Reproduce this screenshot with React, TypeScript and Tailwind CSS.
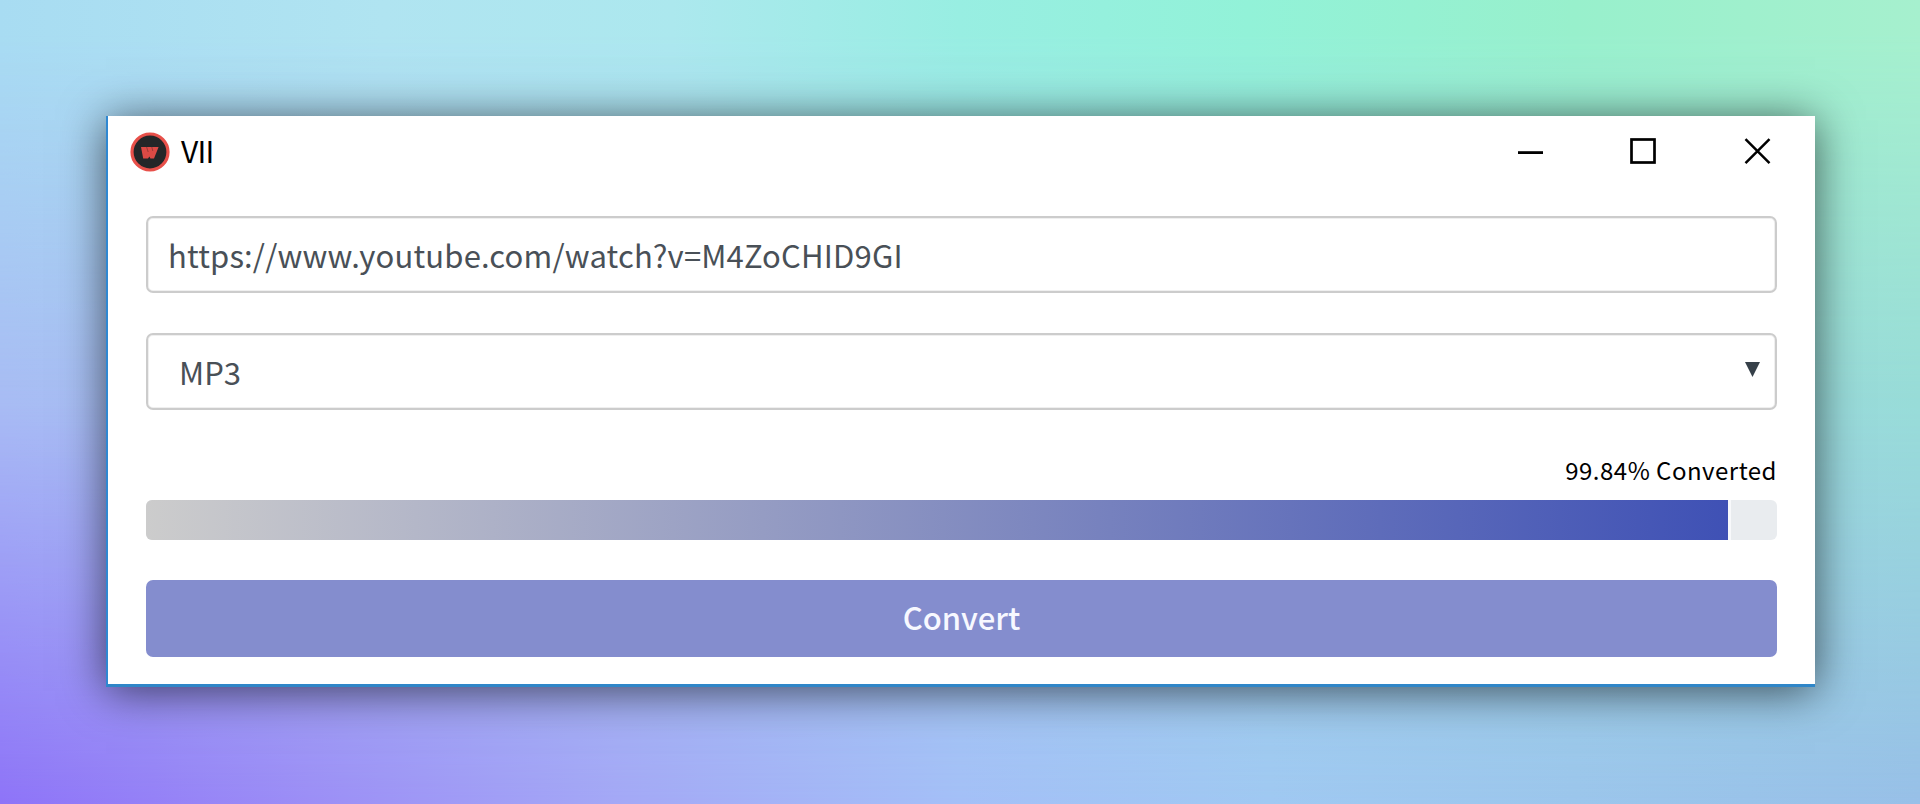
const layer = 'col-start-1 row-start-1 h-[804px] w-full';
const field =
  'flex h-[77px] items-center rounded-[7px] border-2 border-[#cccccc] text-[31px] leading-[40px] text-[#495057] shadow-[inset_0_0_0_1px_#efefef]';

function Backdrop() {
  return (
    <>
      <div
        className={`${layer} bg-[linear-gradient(90deg,#8e74f8_0%,#9c8ef6_16%,#a4a8f6_32%,#a4c0f7_50%,#a0c9f2_66%,#9cc6ec_82%,#98c0e8_100%)]`}
      />
      <div
        className={`${layer} bg-[linear-gradient(90deg,#a8bcf4_0%,#a4d0f0_50%,#98dcd8_100%)] [mask-image:linear-gradient(180deg,black_50%,transparent_100%)]`}
      />
      <div
        className={`${layer} bg-[linear-gradient(90deg,#a8dcf2_0%,#b0e4f1_20%,#ace8ee_35%,#98eee2_50%,#92f2d8_65%,#98f0cc_82%,#a6f0ce_100%)] [mask-image:linear-gradient(180deg,black_0%,black_4%,transparent_50%)]`}
      />
    </>
  );
}

function Logo() {
  return (
    <svg width="40" height="40" viewBox="0 0 40 40" aria-hidden="true">
      <circle cx="20" cy="20" r="18" fill="#242628" stroke="#e8504a" strokeWidth="3.2" />
      <path d="M11 15H28.6L24 26.6H20.4L19.4 24.4L18 26.6H13.2Z" fill="#dc4a45" />
      <path d="M16.6 15l1.6 5M21.8 15l1 4" stroke="#8c3431" strokeWidth=".8" />
    </svg>
  );
}

function TitleBar() {
  return (
    <header className="flex h-[72px] items-center justify-between pl-[22px] pr-[43px]">
      <div className="flex items-center gap-[11px]">
        <Logo />
        <span className="pb-[5px] text-[30px] leading-[40px] tracking-[-0.8px] text-black">VII</span>
      </div>
      <div className="flex items-center gap-[86px]">
        <button aria-label="Minimize">
          <svg width="28" height="28" viewBox="0 0 28 28">
            <path d="M2 14.6h25" stroke="#000" strokeWidth="2.8" />
          </svg>
        </button>
        <button aria-label="Maximize">
          <svg width="28" height="28" viewBox="0 0 28 28">
            <rect x="1.5" y="1.5" width="23" height="23" fill="none" stroke="#000" strokeWidth="2.7" />
          </svg>
        </button>
        <button aria-label="Close">
          <svg width="28" height="28" viewBox="0 0 28 28">
            <path d="M1.5 1.2l24 24M25.5 1.2l-24 24" stroke="#000" strokeWidth="2.5" />
          </svg>
        </button>
      </div>
    </header>
  );
}

export default function App() {
  const progress = 97.15;
  return (
    <div className="grid h-[804px] w-full overflow-hidden font-['Noto_Sans_CJK_JP',sans-serif]">
      <Backdrop />
      <main className="z-10 col-start-1 row-start-1 ml-[106px] mt-[116px] h-[571px] w-[1709px] border-b-[3px] border-l-2 border-b-[#2f86c8] border-l-[#2f88d2] bg-white shadow-[0_4px_42px_0_rgba(0,0,0,0.62)]">
        <TitleBar />
        <div className="flex flex-col pl-[38px] pr-[38px] pt-[28px]">
          <div className={`${field} pl-5 tracking-[0.17px]`}>https://www.youtube.com/watch?v=M4ZoCHID9GI</div>
          <div className={`${field} mt-[40px] justify-between pl-[31px] pr-[15px]`}>
            <span>MP3</span>
            <svg width="15" height="15" viewBox="0 0 15 15" className="mb-[4px]">
              <path d="M0 0h15L7.5 15z" fill="#364049" />
            </svg>
          </div>
          <div className="mt-[42px] text-right text-[24px] leading-[36px] tracking-[0.5px] text-black">
            99.84% Converted
          </div>
          <div className="mt-[12px] flex h-10 overflow-hidden rounded-[6px] bg-[#e9ecef]">
            <div
              className="border-r-[3px] border-[#f8f9fb] bg-[linear-gradient(90deg,#cccccc_0%,#3f51b5_100%)]"
              style={{ width: `${progress}%` }}
            />
          </div>
          <button className="mt-[40px] h-[77px] rounded-[7px] bg-[#848dce] pb-[3px] text-[31px] font-medium leading-[40px] text-[#f7f8ff]">
            Convert
          </button>
        </div>
      </main>
    </div>
  );
}
